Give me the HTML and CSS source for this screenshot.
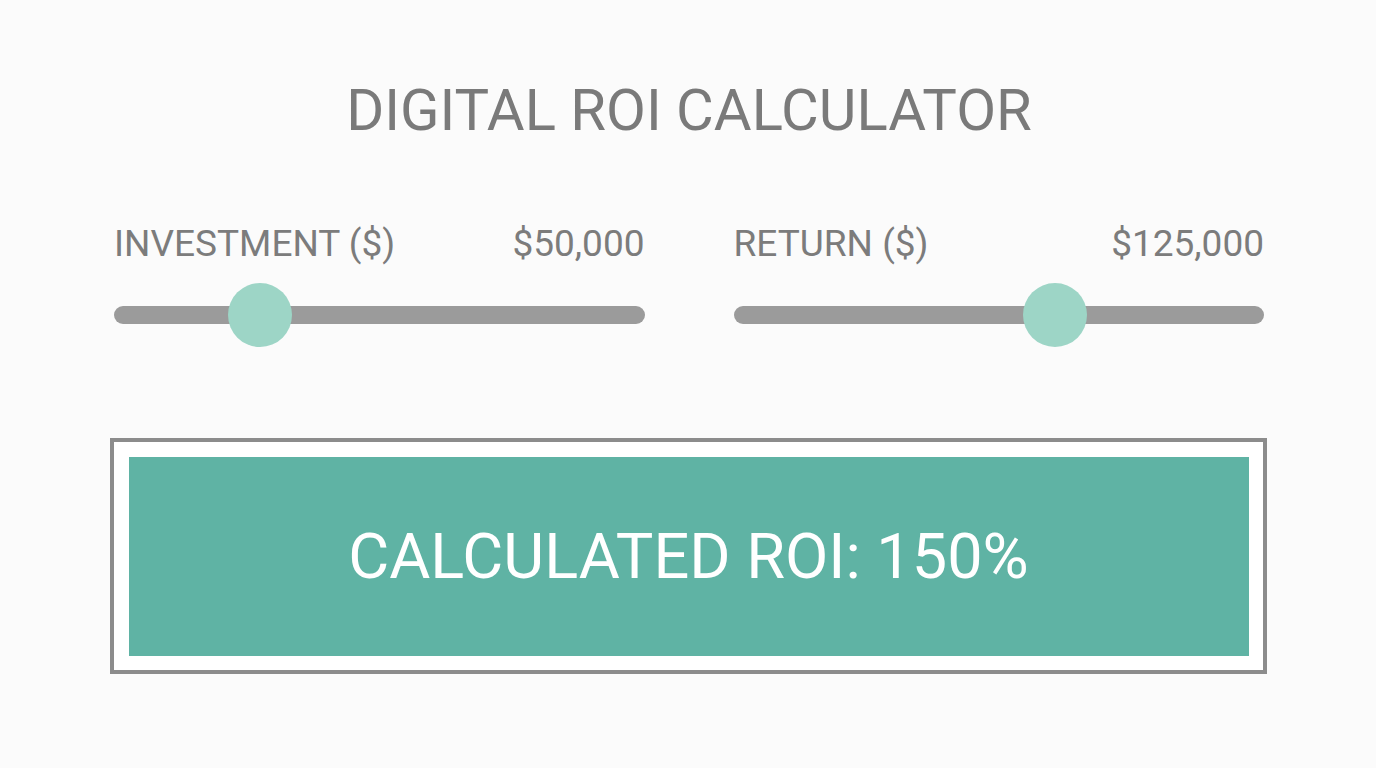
FILE: index.html
```html
<!DOCTYPE html>
<html>
<head>
<meta charset="utf-8">
<link rel="stylesheet" href="styles.css">
</head>
<body>
<div class="page">
  <h1 class="title">DIGITAL ROI CALCULATOR</h1>
  <div class="sliders">
    <div class="slider">
      <div class="slider-head"><span>INVESTMENT ($)</span><span>$50,000</span></div>
      <div class="track"><div class="thumb" style="left: 114px"></div></div>
    </div>
    <div class="slider">
      <div class="slider-head"><span>RETURN ($)</span><span>$125,000</span></div>
      <div class="track"><div class="thumb" style="left: 289px"></div></div>
    </div>
  </div>
  <div class="result-frame">
    <div class="result">CALCULATED ROI: 150%</div>
  </div>
</div>
</body>
</html>
```
FILE: styles.css
```css
html, body {
  margin: 0;
  padding: 0;
  background: #fbfbfb;
  font-family: Roboto, "Liberation Sans", sans-serif;
}
.page {
  width: 1376px;
  height: 768px;
  display: flex;
  flex-direction: column;
  align-items: center;
}
.title {
  margin: 78px 0 0 0;
  font-size: 58px;
  font-weight: 400;
  line-height: 64px;
  color: #7a7a7a;
  transform: translateX(1px);
}
.sliders {
  margin-top: 82px;
  width: 1150px;
  display: flex;
  gap: 89px;
  transform: translateX(1px);
}
.slider {
  flex: 1;
  display: flex;
  flex-direction: column;
}
.slider-head {
  display: flex;
  justify-content: space-between;
  font-size: 37px;
  line-height: 40px;
  color: #7c7c7c;
}
.track {
  position: relative;
  margin-top: 42px;
  height: 18px;
  border-radius: 9px;
  background: #9b9b9b;
}
.thumb {
  position: absolute;
  top: -23px;
  width: 64px;
  height: 64px;
  border-radius: 50%;
  background: #9dd5c6;
}
.result-frame {
  margin-top: 114px;
  width: 1157px;
  height: 236px;
  border: 4px solid #8c8c8c;
  background: #ffffff;
  padding: 15px 14px 14px 15px;
  box-sizing: border-box;
}
.result {
  width: 100%;
  height: 100%;
  background: #5fb3a4;
  color: #ffffff;
  display: flex;
  align-items: center;
  justify-content: center;
  font-size: 63px;
  box-sizing: border-box;
}
```
